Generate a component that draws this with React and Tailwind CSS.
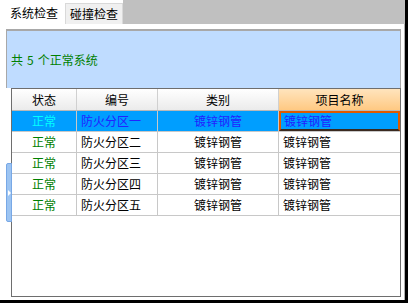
import React from "react";

const rows = [
  { state: "正常", code: "防火分区一", kind: "镀锌钢管", name: "镀锌钢管" },
  { state: "正常", code: "防火分区二", kind: "镀锌钢管", name: "镀锌钢管" },
  { state: "正常", code: "防火分区三", kind: "镀锌钢管", name: "镀锌钢管" },
  { state: "正常", code: "防火分区四", kind: "镀锌钢管", name: "镀锌钢管" },
  { state: "正常", code: "防火分区五", kind: "镀锌钢管", name: "镀锌钢管" },
];

const cols = "grid grid-cols-[65px_81px_121px_1fr]";

const App = () => {
  return (
    <div
      className="relative w-[408px] h-[303px] bg-black overflow-hidden text-[12px] leading-none"
      style={{ fontFamily: '"Noto Sans CJK SC", "Noto Sans", sans-serif' }}
    >
      <div className="w-[405px] h-[300px] bg-white flex flex-col">
        {/* Tabs */}
        <div className="h-[24px] flex bg-[#c0c0c0] shrink-0">
          <div className="w-[64px] bg-white flex items-center pl-[10px] pt-[2px] text-black">系统检查</div>
          <div className="w-[1px] bg-white" />
          <div className="flex flex-col w-[58px] bg-white">
            <div className="h-[3px] bg-white" />
            <div className="flex-1 bg-[#f0f0f0] border border-b-0 border-[#d9d9d9] flex items-center pl-[4px] text-black">
              碰撞检查
            </div>
          </div>
          <div className="flex-1" />
        </div>

        {/* Panel */}
        <div className="flex-1 flex flex-col pl-[6px] pt-[5px] pr-[3px] border-r border-[#b0b0b0]">
          <div className="h-[59px] border-t-2 border-l border-r border-[#a8a8a8] bg-[#bfdcff] flex items-center pl-[4px] text-[#008000]">
            <span>共</span>
            <span className="ml-[4px]">5</span>
            <span className="ml-[4px]">个正常系统</span>
          </div>
          <div className="flex-1 pl-[5px] pb-[3px] flex">
            <div className="flex-1 border border-[#6e6e6e] bg-white flex flex-col">
              {/* Header */}
              <div className={`${cols} h-[22px] border-b border-[#b8b8b8]`}>
                <div className="flex items-center justify-center bg-gradient-to-b from-white to-[#ebebeb] border-r border-[#d0d0d0] text-black">状态</div>
                <div className="flex items-center justify-center bg-gradient-to-b from-white to-[#ebebeb] border-r border-[#d0d0d0] text-black">编号</div>
                <div className="flex items-center justify-center bg-gradient-to-b from-white to-[#ebebeb] border-r border-[#d0d0d0] text-black">类别</div>
                <div className="flex items-center justify-center bg-gradient-to-b from-[#ffe4bd] to-[#ffc982] text-black">项目名称</div>
              </div>
              {/* Rows */}
              {rows.map((r, i) =>
                i === 0 ? (
                  <div key={r.code} className={`${cols} h-[21px] bg-[#009eff] border-b border-[#c8c8c8]`}>
                    <div className="flex items-center justify-center text-[#00ffff] border-r border-[#c8c8c8]">{r.state}</div>
                    <div className="flex items-center pl-[4px] text-[#2222ff] border-r border-[#c8c8c8]">{r.code}</div>
                    <div className="flex items-center justify-center text-[#2222ff] border-r border-[#c8c8c8]">{r.kind}</div>
                    <div className="flex items-center pl-[3px] text-[#2222ff] border-2 border-[#e05a00] border-b-[#3a2a20]">{r.name}</div>
                  </div>
                ) : (
                  <div key={r.code} className={`${cols} h-[21px] border-b border-[#c8c8c8]`}>
                    <div className="flex items-center justify-center text-[#008000] border-r border-[#c8c8c8]">{r.state}</div>
                    <div className="flex items-center pl-[4px] text-black border-r border-[#c8c8c8]">{r.code}</div>
                    <div className="flex items-center justify-center text-black border-r border-[#c8c8c8]">{r.kind}</div>
                    <div className="flex items-center pl-[4px] text-black">{r.name}</div>
                  </div>
                )
              )}
            </div>
          </div>
        </div>
      </div>

      {/* Scroll handle overlay */}
      <div className="absolute left-[6px] top-[163px] w-[6px] h-[59px] bg-[#9cc4f2] border border-[#78a8e6] rounded-l-[2px] flex items-center justify-end">
        <div className="w-0 h-0 border-y-[3px] border-y-transparent border-l-[3px] border-l-white" />
      </div>
    </div>
  );
};

export default App;
